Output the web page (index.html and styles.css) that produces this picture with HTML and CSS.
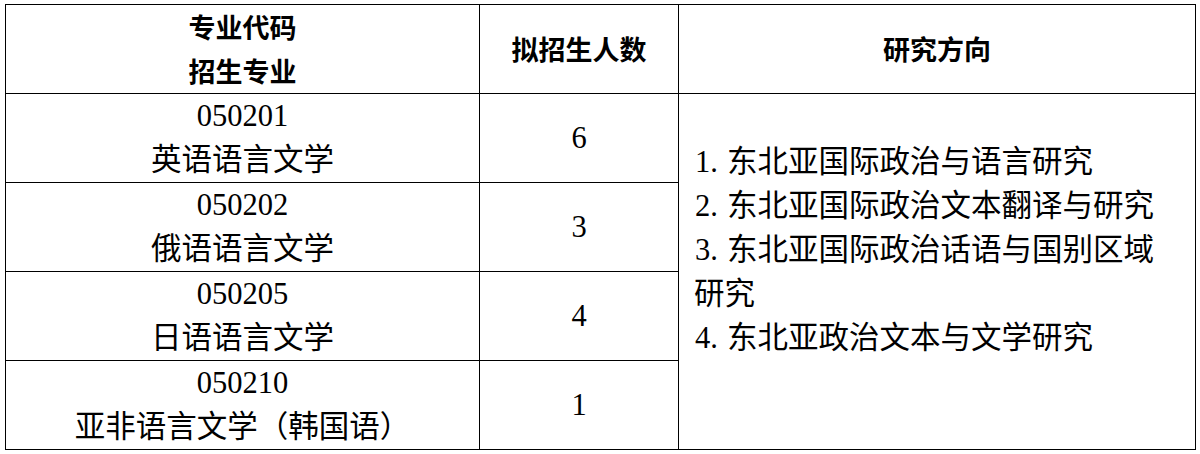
FILE: index.html
```html
<!DOCTYPE html>
<html lang="zh-CN">
<head>
<meta charset="utf-8">
<title>招生专业</title>
<link rel="stylesheet" href="styles.css">
</head>
<body>
<table class="plan">
  <colgroup>
    <col class="c-major">
    <col class="c-num">
    <col class="c-dir">
  </colgroup>
  <thead>
    <tr>
      <th><div class="ln">专业代码</div><div class="ln">招生专业</div></th>
      <th>拟招生人数</th>
      <th>研究方向</th>
    </tr>
  </thead>
  <tbody>
    <tr>
      <td><div class="ln">050201</div><div class="ln">英语语言文学</div></td>
      <td>6</td>
      <td class="dir" rowspan="4">
        <div class="ln"><span class="no">1.</span>东北亚国际政治与语言研究</div>
        <div class="ln"><span class="no">2.</span>东北亚国际政治文本翻译与研究</div>
        <div class="ln"><span class="no">3.</span>东北亚国际政治话语与国别区域</div>
        <div class="ln">研究</div>
        <div class="ln"><span class="no">4.</span>东北亚政治文本与文学研究</div>
        <div class="ln">&nbsp;</div>
      </td>
    </tr>
    <tr>
      <td><div class="ln">050202</div><div class="ln">俄语语言文学</div></td>
      <td>3</td>
    </tr>
    <tr>
      <td><div class="ln">050205</div><div class="ln">日语语言文学</div></td>
      <td>4</td>
    </tr>
    <tr class="last">
      <td><div class="ln">050210</div><div class="ln">亚非语言文学（韩国语）</div></td>
      <td>1</td>
    </tr>
  </tbody>
</table>
</body>
</html>
```

FILE: styles.css
```css
html, body {
  margin: 0;
  padding: 0;
  background: #ffffff;
}

body {
  padding: 4px 0 0 5px;
}

.plan {
  border-collapse: collapse;
  table-layout: fixed;
  width: 1190px;
  color: #000000;
  font-family: "Liberation Serif", "Noto Sans CJK SC", serif;
  font-size: 30.5px;
}

.c-major { width: 474px; }
.c-num { width: 199px; }
.c-dir { width: 517px; }

.plan th,
.plan td {
  border: 1px solid #000000;
  padding: 0;
  height: 88px;
  line-height: 44px;
  text-align: center;
  vertical-align: middle;
  white-space: nowrap;
}

.plan th {
  font-family: "Noto Sans CJK SC", sans-serif;
  font-weight: 700;
  font-size: 27px;
}

.plan .last td {
  height: 87px;
}

.plan td.dir {
  text-align: left;
  padding-left: 15px;
}

.ln {
  height: 44px;
}

.no {
  display: inline-block;
  width: 32px;
  padding-left: 1px;
}
```
